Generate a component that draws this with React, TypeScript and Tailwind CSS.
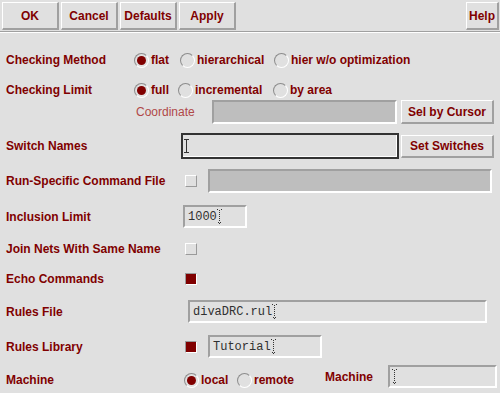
import { ReactNode } from "react";

const sans = "font-['Liberation_Sans',Arial,sans-serif]";
const mono = "font-['Liberation_Mono','Courier_New',monospace]";

function Btn({ label, w }: { label: string; w: string }) {
  return (
    <button
      className={`${w} h-[28px] shrink-0 border-t border-l border-r-2 border-b-2 border-t-white border-l-white border-r-[#a0a0a0] border-b-[#a0a0a0] bg-[#e0e0e0] text-[12px] font-bold text-[#800000]`}
    >
      {label}
    </button>
  );
}

function SmallBtn({ label, h }: { label: string; h: string }) {
  return (
    <button
      className={`w-[93px] ${h} shrink-0 border-t border-l border-r-2 border-b-2 border-t-white border-l-white border-r-[#a0a0a0] border-b-[#a0a0a0] bg-[#e0e0e0] text-[12px] font-bold text-[#800000]`}
    >
      {label}
    </button>
  );
}

function Radio({ on = false }: { on?: boolean }) {
  return (
    <span className="flex h-[15px] w-[15px] shrink-0 items-center justify-center rounded-full border border-t-[#8c8c8c] border-l-[#8c8c8c] border-b-white border-r-white">
      {on && <span className="h-[9px] w-[9px] rounded-full bg-[#800000]" />}
    </span>
  );
}

function Option({ on, label, w }: { on?: boolean; label: string; w: string }) {
  return (
    <div className={`flex ${w} shrink-0 items-center`}>
      <Radio on={on} />
      <span className="ml-[2px] font-bold">{label}</span>
    </div>
  );
}

function Check({ on = false }: { on?: boolean }) {
  return on ? (
    <span className="h-[12px] w-[12px] shrink-0 border border-t-[#9a9a9a] border-l-[#9a9a9a] border-b-white border-r-white bg-[#800000]" />
  ) : (
    <span className="h-[12px] w-[12px] shrink-0 border border-t-white border-l-white border-b-[#9a9a9a] border-r-[#9a9a9a]" />
  );
}

function Field({
  w,
  disabled = false,
  children,
}: {
  w: string;
  disabled?: boolean;
  children?: ReactNode;
}) {
  return (
    <div
      className={`flex ${w} h-full shrink-0 items-center border-2 border-t-[#a0a0a0] border-l-[#a0a0a0] border-b-white border-r-white pl-[2px] ${
        disabled ? "bg-[#bebebe]" : "bg-[#e0e0e0]"
      } ${mono} text-[12px] text-[#303030]`}
    >
      {children}
    </div>
  );
}

// dotted insertion caret drawn the way the old toolkit does it
function Caret() {
  const dots = [1, 3, 5, 7, 9, 11];
  return (
    <svg width="5" height="15" className="shrink-0" shapeRendering="crispEdges">
      <rect x="0" y="0" width="1" height="1" fill="#333" />
      <rect x="4" y="0" width="1" height="1" fill="#333" />
      {dots.map((y) => (
        <rect key={y} x="2" y={y} width="1" height="1" fill="#333" />
      ))}
      <rect x="1" y="13" width="1" height="1" fill="#333" />
      <rect x="3" y="13" width="1" height="1" fill="#333" />
      <rect x="2" y="14" width="1" height="1" fill="#333" />
    </svg>
  );
}

function Label({ w, children }: { w: string; children: ReactNode }) {
  return <div className={`${w} shrink-0 pl-[6px] font-bold`}>{children}</div>;
}

export default function App() {
  return (
    <div
      className={`h-[393px] w-[500px] overflow-hidden bg-[#e0e0e0] ${sans} text-[12px] leading-none text-[#800000]`}
    >
      {/* toolbar */}
      <div className="flex h-[31px] items-start gap-[2px] pl-[2px] pr-[1px] pt-[2px]">
        <Btn label="OK" w="w-[57px]" />
        <Btn label="Cancel" w="w-[57px]" />
        <Btn label="Defaults" w="w-[57px]" />
        <Btn label="Apply" w="w-[57px]" />
        <div className="flex-1" />
        <Btn label="Help" w="w-[33px]" />
      </div>
      <div className="h-px bg-[#a0a0a0]" />
      <div className="h-px bg-white" />

      <div className="mt-[17px] flex h-[20px] items-center">
        <Label w="w-[134px]">Checking Method</Label>
        <Option on label="flat" w="w-[46px]" />
        <Option label="hierarchical" w="w-[94px]" />
        <Option label="hier w/o optimization" w="w-[150px]" />
      </div>

      <div className="mt-[10px] flex h-[20px] items-center">
        <Label w="w-[134px]">Checking Limit</Label>
        <Option on label="full" w="w-[44px]" />
        <Option label="incremental" w="w-[95px]" />
        <Option label="by area" w="w-[100px]" />
      </div>

      <div className="flex h-[24px] items-center">
        <div className="w-[212px] shrink-0 pl-[136px] text-[#b04848]">Coordinate</div>
        <Field w="w-[185px]" disabled />
        <div className="ml-[4px]">
          <SmallBtn label="Sel by Cursor" h="h-[24px]" />
        </div>
      </div>

      <div className="mt-[9px] flex h-[26px] items-center">
        <Label w="w-[181px]">Switch Names</Label>
        <div className="h-full w-[218px] shrink-0 border-2 border-[#333]">
          <div className="flex h-full items-center border-b border-r border-b-white border-r-white pl-[1px]">
            <svg width="5" height="14" shapeRendering="crispEdges">
              <rect x="0" y="0" width="5" height="1" fill="#333" />
              <rect x="2" y="0" width="1" height="14" fill="#333" />
              <rect x="0" y="13" width="5" height="1" fill="#333" />
            </svg>
          </div>
        </div>
        <div className="ml-[2px]">
          <SmallBtn label="Set Switches" h="h-[23px]" />
        </div>
      </div>

      <div className="mt-[10px] flex h-[24px] items-center">
        <Label w="w-[185px]">Run-Specific Command File</Label>
        <Check />
        <div className="ml-[11px] h-full">
          <Field w="w-[284px]" disabled />
        </div>
      </div>

      <div className="mt-[12px] flex h-[23px] items-center">
        <Label w="w-[183px]">Inclusion Limit</Label>
        <Field w="w-[64px]">
          <span className="pl-[1px]">1000</span>
          <Caret />
        </Field>
      </div>

      <div className="mt-[11px] flex h-[20px] items-center">
        <Label w="w-[185px]">Join Nets With Same Name</Label>
        <Check />
      </div>

      <div className="mt-[10px] flex h-[20px] items-center">
        <Label w="w-[185px]">Echo Commands</Label>
        <Check on />
      </div>

      <div className="mt-[11px] flex h-[23px] items-center">
        <Label w="w-[188px]">Rules File</Label>
        <Field w="w-[299px]">
          <span className="pl-[1px]">divaDRC.rul</span>
          <Caret />
        </Field>
      </div>

      <div className="mt-[12px] flex h-[23px] items-center">
        <Label w="w-[185px]">Rules Library</Label>
        <Check on />
        <div className="ml-[11px] h-full">
          <Field w="w-[114px]">
            <span className="pl-[1px]">Tutorial</span>
            <Caret />
          </Field>
        </div>
      </div>

      <div className="mt-[7px] flex h-[23px] items-center">
        <div className="mt-[6px] flex items-center">
          <Label w="w-[184px]">Machine</Label>
        </div>
        <div className="mt-[7px] flex items-center">
          <Option on label="local" w="w-[53px]" />
          <Option label="remote" w="w-[88px]" />
        </div>
        <div className="w-[63px] shrink-0 font-bold">Machine</div>
        <Field w="w-[109px]">
          <Caret />
        </Field>
      </div>
    </div>
  );
}
